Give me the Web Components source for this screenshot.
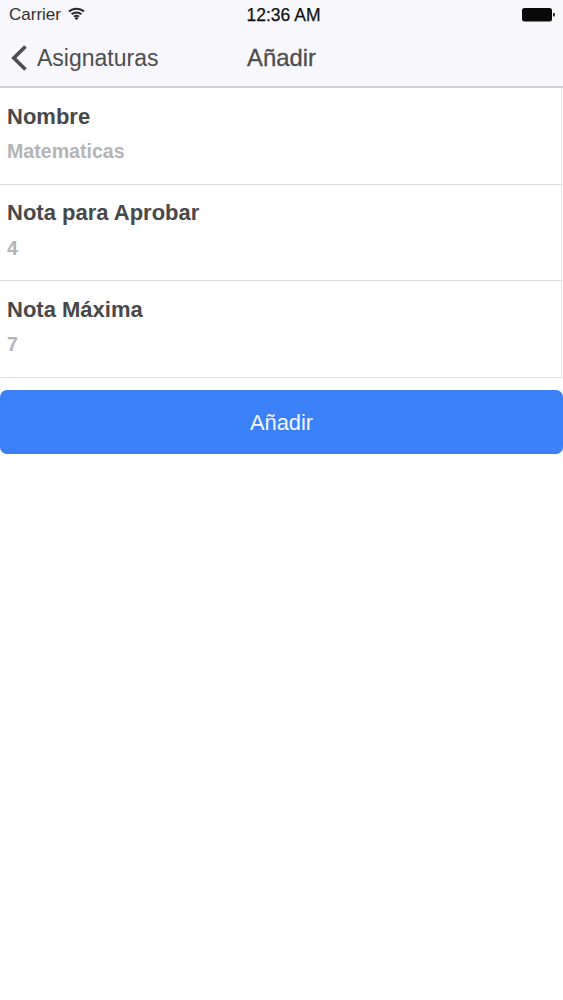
<!DOCTYPE html>
<html lang="es">
<head>
<meta charset="utf-8">
<title>Añadir</title>
<style>
  html, body { margin: 0; height: 100%; background: #fff; }
  body { font-family: "Liberation Sans", Arial, sans-serif; overflow: hidden; }
</style>
</head>
<body>
<app-header back="Asignaturas" title="Añadir" carrier="Carrier" time="12:36 AM"></app-header>
<form-list>
  <form-row label="Nombre" value="Matematicas"></form-row>
  <form-row label="Nota para Aprobar" value="4"></form-row>
  <form-row label="Nota Máxima" value="7"></form-row>
</form-list>
<block-button>Añadir</block-button>

<script>
(function () {
  class AppHeader extends HTMLElement {
    constructor() {
      super();
      this.attachShadow({ mode: 'open' }).innerHTML = `
        <style>
          :host { display: block; height: 86px; background: #f8f7fb; border-bottom: 2px solid #d2d1d5; color: #4d4d4f; }
          .status { height: 30px; display: grid; grid-template-columns: 1fr auto 1fr; align-items: center; padding: 0 8px 0 9px; color: #303032; font-size: 17px; }
          .left { display: flex; align-items: center; gap: 7px; }
          .time { margin-left: 3px; font-size: 17.5px; font-weight: 500; color: #111; -webkit-text-stroke: .25px #111; }
          .right { display: flex; justify-content: flex-end; }
          .nav { height: 56px; display: grid; grid-template-columns: 1fr auto 1fr; align-items: center; padding-left: 10px; padding-right: 10px; font-size: 23px; }
          .back { display: flex; align-items: center; gap: 9px; }
          .title { font-size: 23.8px; -webkit-text-stroke: .3px #4d4d4f; }
          svg { display: block; }
        </style>
        <div class="status">
          <div class="left">
            <span class="carrier"></span>
            <svg width="17" height="13" viewBox="0 0 17 13" style="margin-top:-3px">
              <g fill="none" stroke="#2c2c2e" stroke-width="2">
                <path d="M1 4.6C5.2.7 11.8.7 16 4.6"/>
                <path d="M3.6 7.3c2.8-2.5 7-2.5 9.8 0"/>
                <path d="M6 9.7c1.4-1.1 3.6-1.1 5 0"/>
              </g>
              <path d="M8.5 9.8l2 1.6-2 1.6-2-1.6z" fill="#2c2c2e"/>
            </svg>
          </div>
          <span class="time"></span>
          <div class="right">
            <svg width="33" height="14" viewBox="0 0 33 14">
              <rect x="0" y="0" width="30" height="13.5" rx="2.5" fill="#0a0a0a"/>
              <path d="M31 5h1a.8.8 0 0 1 .8.8v2a.8.8 0 0 1-.8.8h-1z" fill="#222"/>
            </svg>
          </div>
        </div>
        <div class="nav">
          <div class="back">
            <svg width="18" height="28" viewBox="0 0 18 28" style="margin-top:-1px">
              <path d="M15.5 2.5L3.8 14l11.7 11.5" fill="none" stroke="#4d4d4f" stroke-width="3.6"/>
            </svg>
            <span class="back-label"></span>
          </div>
          <span class="title"></span>
          <span></span>
        </div>`;
    }
    connectedCallback() {
      const root = this.shadowRoot;
      root.querySelector('.carrier').textContent = this.getAttribute('carrier') || '';
      root.querySelector('.time').textContent = this.getAttribute('time') || '';
      root.querySelector('.back-label').textContent = this.getAttribute('back') || '';
      root.querySelector('.title').textContent = this.getAttribute('title') || '';
    }
  }

  class FormList extends HTMLElement {
    constructor() {
      super();
      this.attachShadow({ mode: 'open' }).innerHTML = `
        <style>
          :host { display: block; box-sizing: border-box; width: 562px; border-right: 1.5px solid #e3e3e3; }
        </style>
        <slot></slot>`;
    }
  }

  class FormRow extends HTMLElement {
    constructor() {
      super();
      this.attachShadow({ mode: 'open' }).innerHTML = `
        <style>
          :host { display: block; box-sizing: border-box; height: 96.5px; padding: 15.5px 7px 0; border-bottom: 1.5px solid #dcdcdc; }
          .label { font-size: 22px; line-height: 26px; font-weight: 700; color: #48484a; }
          .value { font-size: 19.6px; line-height: 24px; font-weight: 700; color: #b4b4b7; margin-top: 9.5px; }
        </style>
        <div class="label"></div>
        <div class="value"></div>`;
    }
    connectedCallback() {
      this.shadowRoot.querySelector('.label').textContent = this.getAttribute('label') || '';
      this.shadowRoot.querySelector('.value').textContent = this.getAttribute('value') || '';
    }
  }

  class BlockButton extends HTMLElement {
    constructor() {
      super();
      this.attachShadow({ mode: 'open' }).innerHTML = `
        <style>
          :host { display: flex; box-sizing: border-box; align-items: center; justify-content: center; height: 64px; margin-top: 12.5px; padding-top: 2px; background: #3b80f7; border-radius: 7px; color: #f4f7fe; font-size: 21.8px; }
        </style>
        <slot></slot>`;
    }
  }

  customElements.define('app-header', AppHeader);
  customElements.define('form-list', FormList);
  customElements.define('form-row', FormRow);
  customElements.define('block-button', BlockButton);
})();
</script>
</body>
</html>
